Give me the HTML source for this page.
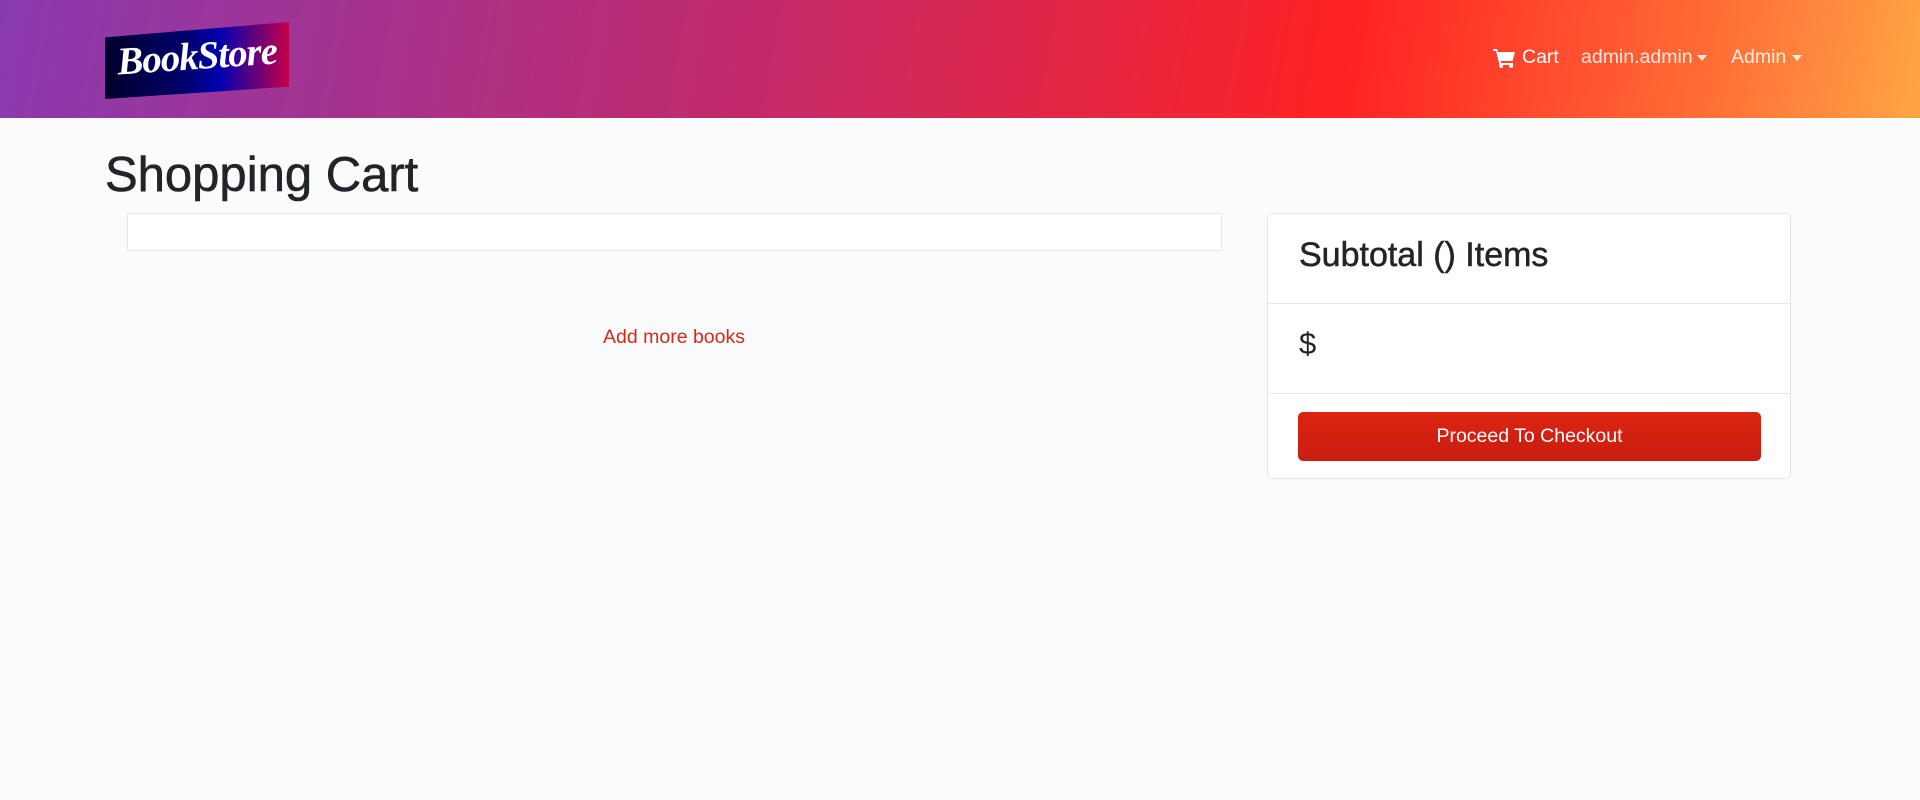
<!DOCTYPE html>
<html><head><meta charset="utf-8"><style>
*{box-sizing:border-box;margin:0;padding:0}
body{width:1920px;height:800px;background:#fbfbfb;font-family:"Liberation Sans",sans-serif;color:#212529;overflow:hidden;position:relative}
.nav{position:absolute;left:0;top:0;width:1920px;height:118px;background:linear-gradient(100deg,#8a3ab0 0%,#c42a6a 40%,#ff2222 70%,#ff6a35 88%,#ffa545 100%)}
.logo{position:absolute;left:105px;top:22px;width:184px;height:77px;background:linear-gradient(90deg,#00002a 0%,#000070 45%,#0000b0 62%,#c4004a 100%);clip-path:polygon(0 20%,100% 0,100% 84%,0 100%)}
.logo span{position:absolute;left:12px;top:12px;font:italic bold 39px "Liberation Serif",serif;color:#fff;letter-spacing:-1px;transform:rotate(-4deg)}
.nl{position:absolute;top:46px;font-size:19.5px;color:rgba(255,255,255,.85)}
.car{position:absolute;top:0;border-top:6px solid rgba(255,255,255,.85);border-left:5px solid transparent;border-right:5px solid transparent}
h1{position:absolute;left:105px;top:146px;font-size:49px;font-weight:normal;line-height:1.2;-webkit-text-stroke:0.6px #212529}
.lc{position:absolute;left:127px;top:213px;width:1095px;height:38px;background:#fff;border:1px solid #e6e6e6}
.add{position:absolute;left:603px;top:326px;font-size:19.5px;color:#d42a1c}
.card{position:absolute;left:1267px;top:213px;width:524px;height:266px;background:#fff;border:1px solid #e6e6e6;border-radius:5px}
.sep{position:absolute;left:0;width:100%;height:1px;background:#e8e8e8}
.btn{position:absolute;left:30px;top:198px;width:463px;height:49px;border-radius:5px;background:linear-gradient(#dc2410,#c81e12);color:#fff;font-size:19.5px;text-align:center;line-height:49px}
</style></head><body>
<div class="nav">
<div class="logo"><span>BookStore</span></div>
<svg style="position:absolute;left:1493px;top:48px" width="23" height="20" viewBox="0 0 23 20"><path d="M0 1h4l1 3h17l-2.5 9H7.5l.6 2H20v2H6.5L3 3H0z" fill="#fff"/><circle cx="8" cy="18" r="2" fill="#fff"/><circle cx="18" cy="18" r="2" fill="#fff"/></svg>
<div class="nl" style="left:1522px;color:#fff">Cart</div>
<div class="nl" style="left:1581px">admin.admin</div>
<div style="position:absolute;left:1697px;top:55px"><div class="car"></div></div>
<div class="nl" style="left:1731px">Admin</div>
<div style="position:absolute;left:1792px;top:55px"><div class="car"></div></div>
</div>
<h1>Shopping Cart</h1>
<div class="lc"></div>
<div class="add">Add more books</div>
<div class="card">
<div style="position:absolute;left:31px;top:22px;font-size:34px;-webkit-text-stroke:0.5px #212529">Subtotal () Items</div>
<div class="sep" style="top:89px"></div>
<div style="position:absolute;left:31px;top:112px;font-size:31px">$</div>
<div class="sep" style="top:179px"></div>
<div class="btn">Proceed To Checkout</div>
</div>
</body></html>
